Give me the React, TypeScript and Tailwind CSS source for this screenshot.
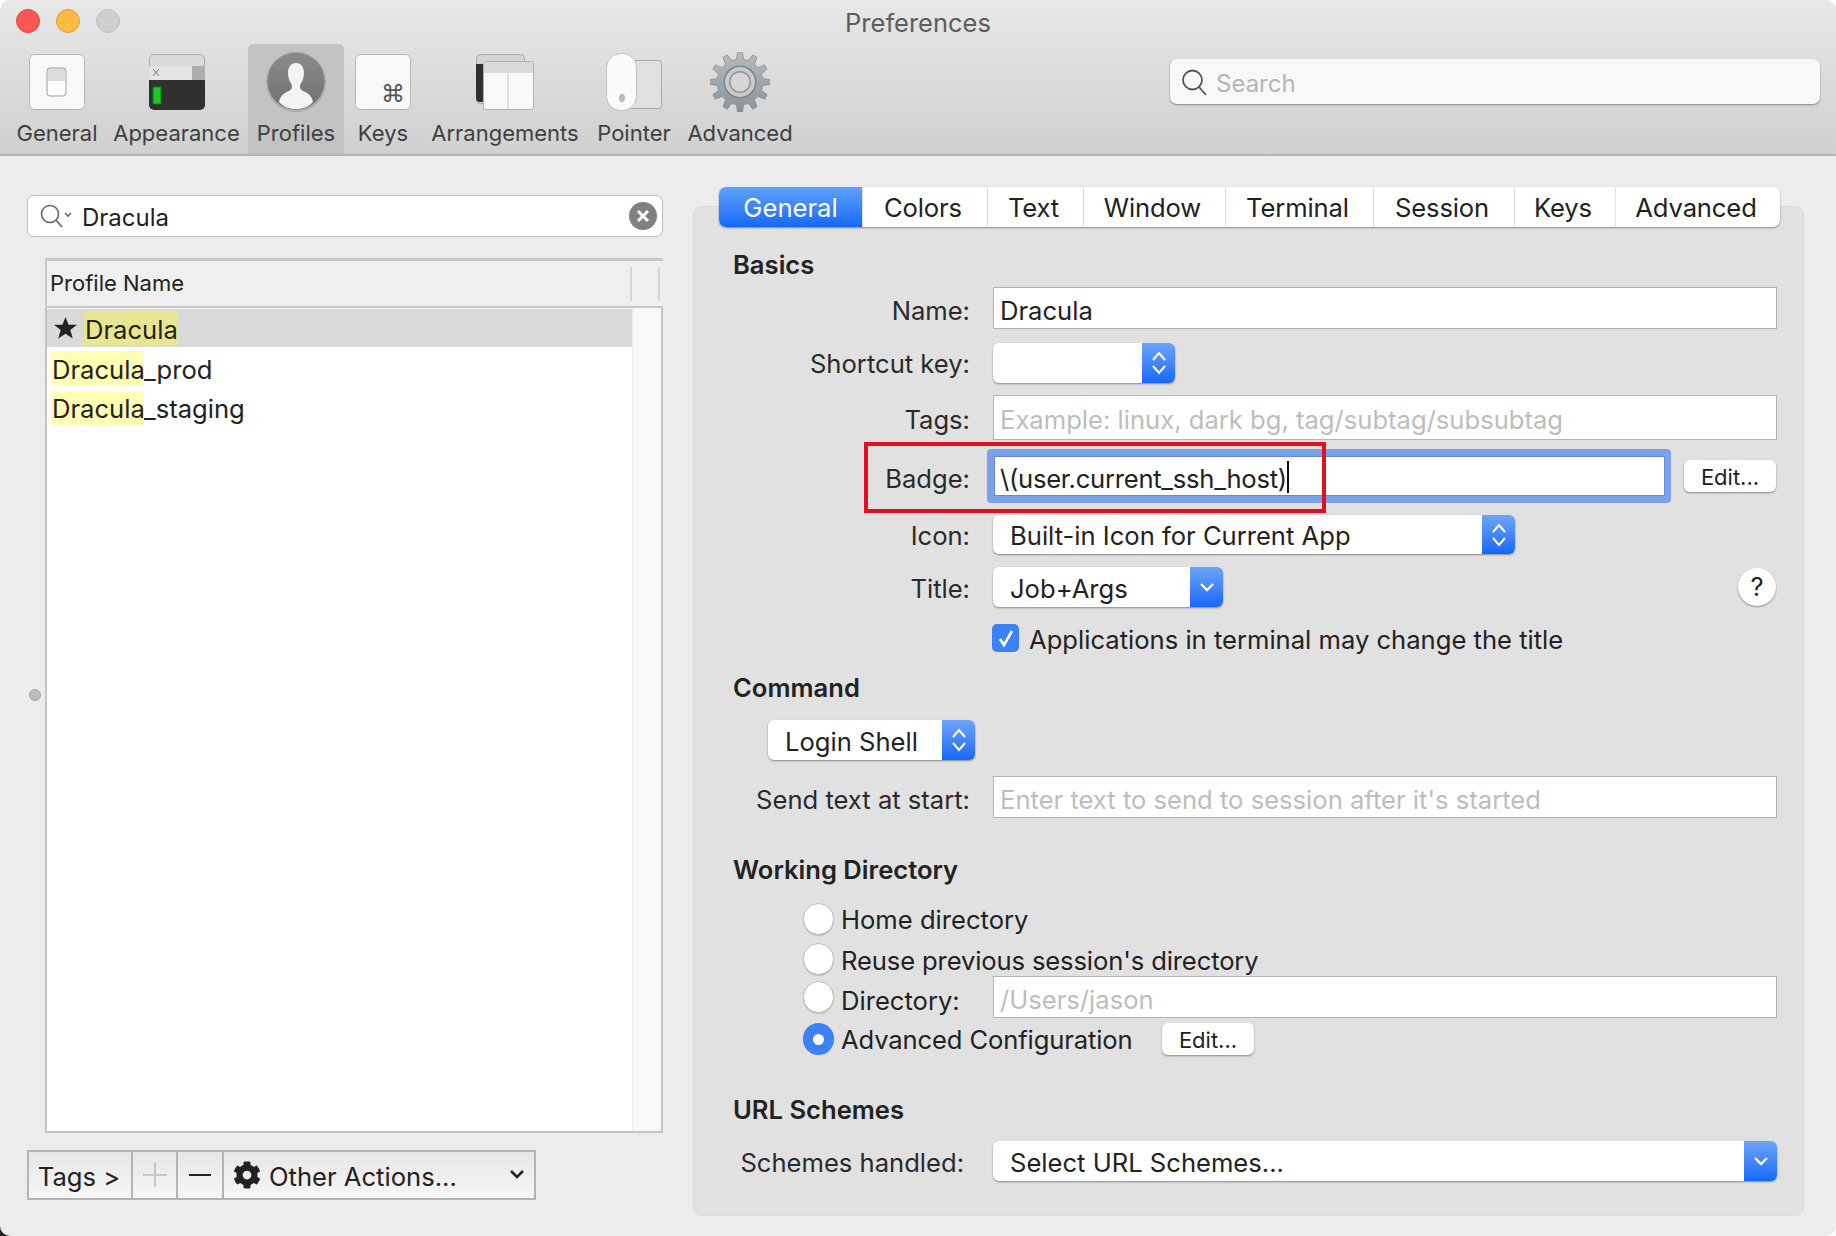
import React from "react";
import { FaCog } from "react-icons/fa";

// gear outline for the Advanced toolbar icon
const gearPath = (() => {
	const teeth = 12;
	const pts: string[] = [];
	for (let i = 0; i < teeth; i++) {
		const step = (Math.PI * 2) / teeth;
		const a = i * step - Math.PI / 2;
		const list: [number, number][] = [
			[23, a - step * 0.3],
			[30, a - step * 0.16],
			[30, a + step * 0.16],
			[23, a + step * 0.3],
		];
		list.forEach(([r, t]) => {
			pts.push(`${(30 + r * Math.cos(t)).toFixed(2)} ${(30 + r * Math.sin(t)).toFixed(2)}`);
		});
	}
	return `M${pts.join("L")}Z`;
})();

const GeneralIcon = () => (
	<svg width="56" height="56" viewBox="0 0 56 56">
		<rect x="0.5" y="0.5" width="55" height="55" rx="5" fill="#f8f8f8" stroke="#b5b5b5" />
		<rect x="18" y="14" width="19" height="28" rx="3" fill="#fff" stroke="#9c9c9c" />
		<rect x="19" y="15" width="17" height="12" fill="#dcdcdc" />
	</svg>
);

const AppearanceIcon = () => (
	<svg width="56" height="56" viewBox="0 0 56 56">
		<path d="M0.5 5a4.500 4.500 0 0 1 4.500-4.500h46a4.500 4.500 0 0 1 4.500 4.500v8h-55z" fill="#d9dbdb" stroke="#aaa" />
		<rect y="12" width="56" height="14" fill="#e4e4e4" />
		<rect x="43" y="12" width="13" height="14" fill="#aeaeae" />
		<path d="M4 15l6 7M10 15l-6 7" stroke="#777" strokeWidth="1" />
		<path d="M0 26h56v25a5 5 0 0 1-5 5H5a5 5 0 0 1-5-5z" fill="#303030" />
		<rect x="4" y="33" width="8" height="17" fill="#1fc72a" stroke="#0d7d16" />
	</svg>
);

const ProfileIcon = () => (
	<svg width="60" height="60" viewBox="0 0 60 60">
		<defs>
			<linearGradient id="pf" x1="0" y1="0" x2="0" y2="1">
				<stop offset="0" stopColor="#8c8c8c" />
				<stop offset="1" stopColor="#6f6f6f" />
			</linearGradient>
		</defs>
		<circle cx="30" cy="30" r="30" fill="#a9a9a9" />
		<circle cx="30" cy="29" r="28.5" fill="url(#pf)" />
		<path
			d="M30 11c-5 0-8 4-8 10 0 5 2 9 3.500 11 1 3 .5 5-2.500 7-5 2-9 5-10 11 5 5 10 7 17 7s12-2 17-7c-1-6-5-9-10-11-3-2-3.500-4-2.500-7 1.500-2 3.500-6 3.500-11 0-6-3-10-8-10z"
			fill="#f4f4f4"
		/>
	</svg>
);

const KeysIcon = () => (
	<svg width="56" height="56" viewBox="0 0 56 56">
		<rect x="0.5" y="0.5" width="55" height="55" rx="5" fill="#f8f8f8" stroke="#b5b5b5" />
		<text x="38" y="48" textAnchor="middle" fontSize="24" fill="#555" fontFamily="DejaVu Sans">
			⌘
		</text>
	</svg>
);

const ArrangementsIcon = () => (
	<svg width="58" height="56" viewBox="0 0 58 56">
		<rect x="0.5" y="0.5" width="48" height="49" rx="4" fill="#d4d4d4" stroke="#a8a8a8" />
		<path d="M0 10h10v38H4a4 4 0 0 1-4-4z" fill="#2f2f2f" />
		<rect x="7.5" y="7.5" width="50" height="48" rx="3" fill="#f8f8f8" stroke="#b0b0b0" />
		<path d="M8 11a3 3 0 0 1 3-3h43a3 3 0 0 1 3 3v8H8z" fill="#d9dbdb" />
		<path d="M32 19v36" stroke="#c8c8c8" />
	</svg>
);

const PointerIcon = () => (
	<svg width="56" height="58" viewBox="0 0 56 58">
		<rect x="22.5" y="7.5" width="33" height="48" rx="3" fill="#dfe0e0" stroke="#a9a9a9" />
		<rect x="0.5" y="0.5" width="30" height="57" rx="14" fill="#fafafa" stroke="#c0c0c0" />
		<ellipse cx="16" cy="45" rx="3" ry="4" fill="#b9b9b9" />
	</svg>
);

const GearIcon = () => (
	<svg width="60" height="60" viewBox="0 0 60 60">
		<defs>
			<linearGradient id="gr" x1="0" y1="0" x2="0" y2="1">
				<stop offset="0" stopColor="#b4babd" />
				<stop offset="1" stopColor="#8d9498" />
			</linearGradient>
		</defs>
		<path d={gearPath} fill="url(#gr)" stroke="#7c8286" strokeWidth="0.6" />
		<circle cx="30" cy="30" r="16.5" fill="#7f8588" />
		<circle cx="30" cy="30" r="15" fill="#c9c9c9" />
		<circle cx="30" cy="30" r="11" fill="#8f9599" />
		<circle cx="30" cy="30" r="9.5" fill="#d6d6d6" />
	</svg>
);

const toolbarItems = [
	{ label: "General", width: "w-[96px]", icon: <GeneralIcon /> },
	{ label: "Appearance", width: "w-[143px]", icon: <AppearanceIcon /> },
	{ label: "Profiles", width: "w-[96px]", icon: <ProfileIcon />, active: true },
	{ label: "Keys", width: "w-[78px]", icon: <KeysIcon /> },
	{ label: "Arrangements", width: "w-[166px]", icon: <ArrangementsIcon /> },
	{ label: "Pointer", width: "w-[92px]", icon: <PointerIcon /> },
	{ label: "Advanced", width: "w-[120px]", icon: <GearIcon /> },
];

const tabs = [
	{ label: "General", width: "w-[143px]" },
	{ label: "Colors", width: "w-[125px]" },
	{ label: "Text", width: "w-[96px]" },
	{ label: "Window", width: "w-[142px]" },
	{ label: "Terminal", width: "w-[148px]" },
	{ label: "Session", width: "w-[141px]" },
	{ label: "Keys", width: "w-[101px]" },
	{ label: "Advanced", width: "w-[165px]" },
];

const UpDown = () => (
	<svg width="16" height="28" viewBox="0 0 16 28" fill="none" stroke="#fff" strokeWidth="2">
		<path d="M2 11l6-7 6 7M2 17l6 7 6-7" />
	</svg>
);

const Down = () => (
	<svg width="16" height="10" viewBox="0 0 16 10" fill="none" stroke="#fff" strokeWidth="2.4">
		<path d="M2 2l6 6 6-6" />
	</svg>
);

const Popup = ({
	className,
	text,
	updown,
}: {
	className: string;
	text?: string;
	updown?: boolean;
}) => (
	<div
		className={`flex items-stretch rounded-[6px] bg-white shadow-[0_1px_2px_rgba(0,0,0,0.4)] overflow-hidden ${className}`}
	>
		<div className="flex-1 pl-[17px] pt-[3px] flex items-center text-[#222]">{text}</div>
		<div className="w-[33px] flex items-center justify-center bg-gradient-to-b from-[#6da4fb] to-[#1167f6]">
			{updown ? <UpDown /> : <Down />}
		</div>
	</div>
);

const Field = ({ text, placeholder, className }: { text?: string; placeholder?: string; className: string }) => (
	<div
		className={`w-[784px] bg-white border border-[#b4b4b4] pl-[6px] pt-[5px] flex items-center ${
			placeholder ? "text-[#bdbdbd]" : "text-[#222]"
		} ${className}`}
	>
		{text || placeholder}
	</div>
);

const Label = ({ children, className = "pt-[2px]" }: { children: React.ReactNode; className?: string }) => (
	<div className={`w-[276px] mr-[23px] shrink-0 text-right text-[#2a2a2a] ${className}`}>{children}</div>
);

const Heading = ({ children, className }: { children: React.ReactNode; className: string }) => (
	<div className={`pl-[39px] h-[30px] flex items-center font-semibold text-[#222] ${className}`}>{children}</div>
);

const EditButton = ({ className = "" }: { className?: string }) => (
	<div
		className={`w-[92px] h-[32px] rounded-[6px] bg-white shadow-[0_1px_2px_rgba(0,0,0,0.4)] flex items-center justify-center pt-[1px] text-[22px] text-[#222] ${className}`}
	>
		Edit...
	</div>
);

const Radio = ({ checked }: { checked?: boolean }) =>
	checked ? (
		<div className="w-[31px] h-[32px] shrink-0 rounded-full bg-[#3b82f6] flex items-center justify-center">
			<div className="w-[11px] h-[11px] rounded-full bg-white" />
		</div>
	) : (
		<div className="w-[31px] h-[32px] shrink-0 rounded-full bg-white border border-[#bdbdbd] shadow-[0_1px_1px_rgba(0,0,0,0.15)]" />
	);

const App = () => {
	return (
		<div className="w-[1836px] h-[1236px] bg-white relative overflow-hidden [font-family:Inter,sans-serif] text-[25.6px] leading-none">
			{/* dark desktop peeking through the bottom-left corner */}
			<div className="absolute left-0 bottom-0 w-[14px] h-[14px] bg-[#222]" />
			<div className="relative h-full rounded-t-[10px] rounded-b-[10px] overflow-hidden bg-[#ececec] flex flex-col">
				{/* Toolbar */}
				<div className="h-[156px] shrink-0 border-b-2 border-[#b3b3b3] bg-gradient-to-b from-[#e8e8e8] to-[#d0d0d0]">
					<div className="h-[44px] grid grid-cols-[1fr_auto_1fr] items-center">
						<div className="flex pl-[16px] gap-[16px] pb-[2px]">
							<div className="w-[24px] h-[24px] rounded-full bg-[#fc5753] border border-[#df4744]" />
							<div className="w-[24px] h-[24px] rounded-full bg-[#fdbc40] border border-[#de9f34]" />
							<div className="w-[24px] h-[24px] rounded-full bg-[#cfcfcf] border border-[#bfbfbf]" />
						</div>
						<div className="text-[25.5px] text-[#5c5c5c] pt-[2px]">Preferences</div>
						<div />
					</div>
					<div className="flex h-[110px] pl-[9px]">
						{toolbarItems.map((item) => (
							<div
								key={item.label}
								className={`${item.width} flex flex-col items-center rounded-t-[5px] ${
									item.active ? "bg-[#c3c3c3]" : ""
								}`}
							>
								<div className="h-[76px] flex items-center justify-center">{item.icon}</div>
								<div className="text-[22px] text-[#404040] mt-[2px]">{item.label}</div>
							</div>
						))}
						<div className="ml-auto mr-[16px] mt-[15px] w-[650px] h-[45px] rounded-[7px] bg-[#f8f8f8] shadow-[0_1px_2px_rgba(0,0,0,0.4)] flex items-center pl-[11px]">
							<svg width="26" height="28" viewBox="0 0 26 28" fill="none" stroke="#555" strokeWidth="1.8">
								<circle cx="11.5" cy="12" r="9.5" />
								<path d="M18 19l7 8" />
							</svg>
							<span className="ml-[9px] text-[24px] text-[#b5b5b5] pt-[5px]">Search</span>
						</div>
					</div>
				</div>

				<div className="flex-1 flex">
					{/* Left column */}
					<div className="w-[693px] shrink-0 relative pl-[27px] pt-[39px]">
						<div className="w-[636px] h-[42px] rounded-[7px] bg-white border border-[#bdbdbd] flex items-center pl-[12px] pr-[5px]">
							<svg width="34" height="26" viewBox="0 0 34 26" fill="none" stroke="#666" strokeWidth="1.6">
								<circle cx="10" cy="11" r="8.5" />
								<path d="M16 17l6 7M25 10l3 3 3-3" />
							</svg>
							<span className="ml-[8px] text-[24px] text-[#222] pt-[4px]">Dracula</span>
							<div className="ml-auto w-[28px] h-[28px] rounded-full bg-[#808080] flex items-center justify-center">
								<svg width="14" height="14" viewBox="0 0 14 14" stroke="#fff" strokeWidth="3">
									<path d="M2 2l10 10M12 2L2 12" />
								</svg>
							</div>
						</div>

						{/* Splitter handle */}
						<div className="absolute left-[29px] top-[533px] w-[12px] h-[12px] rounded-full bg-[#bcbcbc] border border-[#a8a8a8]" />

						{/* Profile table */}
						<div className="ml-[18px] mt-[21px] w-[618px] h-[875px] flex flex-col">
							<div className="h-[50px] shrink-0 bg-[#efefef] border-t-[3px] border-l-2 border-b-2 border-[#c8c8c8] flex items-center">
								<div className="w-[585px] pl-[3px] pb-[2px] text-[22px] text-[#222] h-[34px] flex items-center border-r-2 border-[#d4d4d4]">
									Profile Name
								</div>
								<div className="w-[28px] h-[34px] border-r-2 border-[#d4d4d4]" />
							</div>
							<div className="flex-1 flex border-l-2 border-r-2 border-b-2 border-[#c4c4c4] bg-white">
								<div className="w-[585px] pt-[1px]">
									<div className="h-[38px] bg-[#dadada] flex items-center pl-[7px]">
										<svg width="23" height="22" viewBox="0 0 24 23" fill="#222">
											<path d="M12 0l3.200 8h8.800l-7 5.500 2.600 9L12 17.500 4.400 22.500l2.600-9L0 8h8.800z" />
										</svg>
										<span className="ml-[7px] h-[34px] w-[94px] bg-[#e8e68f] flex items-center pl-[1px] pt-[3px] text-[#222]">
											Dracula
										</span>
									</div>
									<div className="h-[34px] mt-[4px] flex items-center pl-[4px] text-[#222]">
										<span className="h-[34px] w-[93px] bg-[#ffffb3] flex items-center pl-[1px] pt-[4px]">Dracula</span>
										<span className="pt-[4px]">_prod</span>
									</div>
									<div className="h-[34px] mt-[6px] flex items-center pl-[4px] text-[#222]">
										<span className="h-[34px] w-[93px] bg-[#ffffb3] flex items-center pl-[1px] pt-[2px]">Dracula</span>
										<span className="pt-[2px]">_staging</span>
									</div>
								</div>
								<div className="flex-1 bg-[#f8f8f8] border-l border-[#ececec]" />
							</div>
						</div>

						{/* Bottom action bar */}
						<div className="mt-[17px] w-[509px] h-[50px] flex border-2 border-[#b4b4b4] bg-gradient-to-b from-[#e6e6e6] to-[#f6f6f6] text-[#222]">
							<div className="w-[104px] flex items-center justify-center border-r-2 border-[#b4b4b4] pt-[3px] pr-[2px]">Tags &gt;</div>
							<div className="w-[45px] flex items-center justify-center border-r-2 border-[#b4b4b4]">
								<svg width="24" height="24" viewBox="0 0 24 24" stroke="#bdbdbd" strokeWidth="1.6">
									<path d="M12 0v24M0 12h24" />
								</svg>
							</div>
							<div className="w-[46px] flex items-center justify-center border-r-2 border-[#b4b4b4]">
								<div className="w-[22px] h-[2px] bg-[#222]" />
							</div>
							<div className="flex-1 flex items-center pl-[9px] pr-[9px]">
								<FaCog size={28} color="#222" />
								<span className="ml-[8px] pt-[3px]">Other Actions...</span>
								<svg className="ml-auto" width="16" height="12" viewBox="0 0 16 12" fill="none" stroke="#222" strokeWidth="2.6">
									<path d="M2 2l6 6 6-6" />
								</svg>
							</div>
						</div>
					</div>

					{/* Right panel */}
					<div className="w-[1111px] h-[1010px] mt-[50px] bg-[#e1e1e1] rounded-[8px] border border-[#dcdcdc]">
						<div className="relative -mt-[20px] ml-[25px] w-[1061px] h-[40px] flex rounded-[7px] overflow-hidden bg-white shadow-[0_1px_2px_rgba(0,0,0,0.4)]">
							{tabs.map((tab, i) => (
								<div
									key={tab.label}
									className={`${tab.width} flex items-center justify-center pt-[2px] ${
										i === 0
											? "bg-gradient-to-b from-[#5fa0fb] to-[#1169f6] text-white"
											: "text-[#222] border-l border-[#dcdcdc] pr-[4px] tracking-[-0.005em]"
									}`}
								>
									{tab.label}
								</div>
							))}
						</div>

						<Heading className="mt-[23px]">Basics</Heading>

						<div className="mt-[7px] h-[42px] flex items-center">
							<Label className="pt-[6px]">Name:</Label>
							<Field text="Dracula" className="h-[42px]" />
						</div>
						<div className="mt-[14px] h-[40px] flex items-center">
							<Label>Shortcut key:</Label>
							<Popup className="w-[182px] h-[40px]" updown />
						</div>
						<div className="mt-[12px] h-[45px] flex items-center">
							<Label className="pt-[4px]">Tags:</Label>
							<Field placeholder="Example: linux, dark bg, tag/subtag/subsubtag" className="h-[45px]" />
						</div>

						{/* Badge row */}
						<div className="relative mt-[9px] h-[54px] flex items-center">
							<Label className="pt-[6px]">Badge:</Label>
							<div className="-ml-[6px] w-[684px] h-[54px] rounded-[4px] bg-[#7ba1e8] p-[7px] pr-[6px]">
								<div className="h-full bg-white border border-[#5f8ade] pl-[5px] pt-[6px] flex items-center text-[#222] tracking-[-0.01em]">
									\(user.current_ssh_host)
									<div className="w-[2px] h-[32px] bg-[#111] -mt-[4px]" />
								</div>
							</div>
							<EditButton className="ml-[13px]" />
							<div className="absolute left-[170px] -top-[7px] w-[462px] h-[71px] border-4 border-[#e40f20]" />
						</div>

						<div className="mt-[12px] h-[39px] flex items-center">
							<Label>Icon:</Label>
							<Popup className="w-[522px] h-[39px]" text="Built-in Icon for Current App" updown />
						</div>
						<div className="mt-[13px] h-[40px] flex items-center">
							<Label className="pt-[4px]">Title:</Label>
							<Popup className="w-[230px] h-[40px]" text="Job+Args" />
							<div className="ml-[515px] w-[38px] h-[38px] rounded-full bg-white shadow-[0_1px_2px_rgba(0,0,0,0.4)] flex items-center justify-center text-[#222]">
								?
							</div>
						</div>
						<div className="mt-[17px] h-[28px] flex items-center pl-[298px]">
							<div className="w-[27px] h-[28px] rounded-[5px] bg-[#3b82f6] flex items-center justify-center">
								<svg width="18" height="20" viewBox="0 0 18 20" fill="none" stroke="#fff" strokeWidth="2.6">
									<path d="M3 11l4 6 8-14" />
								</svg>
							</div>
							<span className="ml-[10px] text-[#222] pt-[4px]">Applications in terminal may change the title</span>
						</div>

						<Heading className="mt-[21px]">Command</Heading>
						<div className="mt-[17px] h-[40px] pl-[74px]">
							<Popup className="w-[207px] h-[40px]" text="Login Shell" updown />
						</div>
						<div className="mt-[16px] h-[42px] flex items-center">
							<Label className="pt-[5px]">Send text at start:</Label>
							<Field placeholder="Enter text to send to session after it's started" className="h-[42px]" />
						</div>

						<Heading className="mt-[37px]">Working Directory</Heading>
						<div className="mt-[18px] h-[32px] pl-[109px] flex items-center text-[#222]">
							<Radio />
							<span className="ml-[7px] pt-[2px]">Home directory</span>
						</div>
						<div className="mt-[8px] h-[32px] pl-[109px] flex items-center text-[#222]">
							<Radio />
							<span className="ml-[7px] pt-[4px] tracking-[-0.005em]">Reuse previous session's directory</span>
						</div>
						<div className="mt-[1px] h-[42px] pl-[109px] flex items-center text-[#222]">
							<div className="w-[190px] flex items-center">
								<Radio />
								<span className="ml-[7px] pt-[8px]">Directory:</span>
							</div>
							<Field placeholder="/Users/jason" className="h-[42px]" />
						</div>
						<div className="mt-[5px] h-[32px] pl-[109px] flex items-center text-[#222]">
							<div className="w-[359px] flex items-center">
								<Radio checked />
								<span className="ml-[7px] pt-[2px] tracking-[-0.005em]">Advanced Configuration</span>
							</div>
							<EditButton />
						</div>

						<Heading className="mt-[40px]">URL Schemes</Heading>
						<div className="mt-[16px] h-[40px] flex items-center">
							<Label className="pr-[6px] pt-[4px]">Schemes handled:</Label>
							<Popup className="w-[784px] h-[40px]" text="Select URL Schemes..." />
						</div>
					</div>
				</div>
			</div>
		</div>
	);
};

export default App;
